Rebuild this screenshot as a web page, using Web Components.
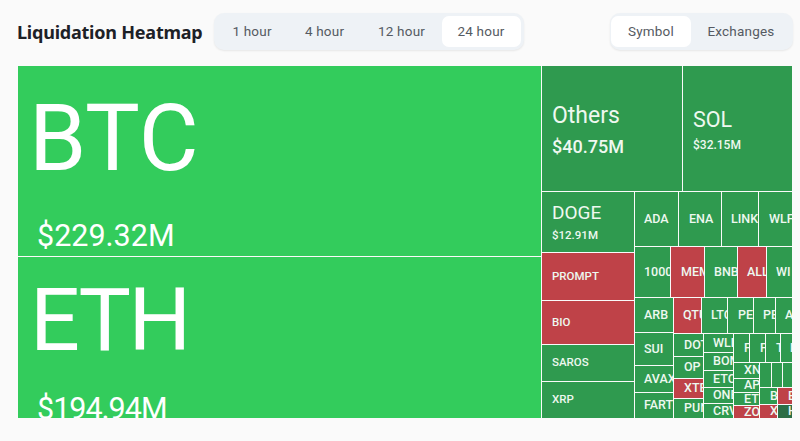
<!DOCTYPE html>
<html><head><meta charset="utf-8"><style>
html,body{margin:0;padding:0;background:#fafafa;width:800px;height:441px;overflow:hidden;font-family:Roboto,"Liberation Sans",sans-serif}
</style></head><body>
<hm-page></hm-page>
<script>
class Base extends HTMLElement{
  constructor(){super();this.attachShadow({mode:'open'});}
}
class HmTabs extends Base{connectedCallback(){
  const p=this.getAttribute('p')||'3px';
  this.shadowRoot.innerHTML=`<style>:host{display:flex;height:37px;box-sizing:border-box;padding:${p};background:#eef2f6;border-radius:10px;box-shadow:0 1px 2px rgba(0,0,0,.08);}</style><slot></slot>`;
}}
class HmTab extends Base{connectedCallback(){
  const on=this.hasAttribute('on');
  this.shadowRoot.innerHTML=`<style>:host{display:flex;align-items:center;justify-content:center;border-radius:7px;font:400 13.5px/1 Roboto,sans-serif;letter-spacing:.2px;color:#555a62;${on?'background:#fff;':''}width:${this.getAttribute('w')}px;height:31px;white-space:nowrap}</style><slot></slot>`;
}}
class HmBox extends Base{connectedCallback(){
  const dir=this.getAttribute('d')||'row',w=this.getAttribute('w'),h=this.getAttribute('h');
  this.shadowRoot.innerHTML=`<style>:host{display:flex;flex-direction:${dir};gap:1px;${w?`width:${w}px;`:''}${h?`height:${h}px;`:''}flex:none;overflow:hidden}</style><slot></slot>`;
}}
const C={g:'#2f9a4f',b:'#33cc5c',r:'#bf4248',d:'#2c6e46'};
class HmCell extends Base{connectedCallback(){
  const w=this.getAttribute('w'),h=this.getAttribute('h'),c=C[this.getAttribute('c')||'g'];
  const fs=+(this.getAttribute('fs')||12.5),pl=this.getAttribute('pl')||'10',val=this.getAttribute('val'),vfs=this.getAttribute('vfs')||fs;
  const t=this.getAttribute('t')||'',vgap=this.getAttribute('gap')||0,pt=this.getAttribute('pt'),vl=this.getAttribute('vl')||0;
  const ls=this.getAttribute('ls')||0,vls=this.getAttribute('vls')||0;
  this.shadowRoot.innerHTML=`<style>
  :host{display:flex;flex:none;box-sizing:border-box;${w?`width:${w}px;`:''}${h?`height:${h}px;`:''}background:${c};color:${fs>50?'#fff':'#eef8f0'};overflow:hidden;flex-direction:column;${pt?`padding-top:${pt}px;justify-content:flex-start;`:'justify-content:center;'}align-items:flex-start;padding-left:${pl}px;}
  .t{font-size:${fs}px;line-height:1;white-space:nowrap;letter-spacing:${ls}px;font-weight:${this.getAttribute('fw')||(fs<15?500:400)};}
  .v{font-size:${vfs}px;line-height:1;margin-top:${vgap}px;margin-left:${vl}px;letter-spacing:${vls}px;white-space:nowrap;font-weight:${this.getAttribute('vw')||400}}
  </style><div class="t">${t}</div>${val?`<div class="v">${val}</div>`:''}`;
}}
class HmPage extends Base{connectedCallback(){
  this.shadowRoot.innerHTML=`<style>
  :host{display:block;width:800px;height:441px;box-sizing:border-box;padding:13px 7px 0 18px}
  header{display:flex;align-items:center;height:37px;margin-bottom:16px}
  h1{margin:0 11px 0 -1px;font:700 18px/1 "Noto Sans",sans-serif;color:#1d2127;letter-spacing:-.22px;white-space:nowrap}
  .sp{flex:1}
  </style>
  <header><h1>Liquidation Heatmap</h1>
   <hm-tabs><hm-tab w="71">1 hour</hm-tab><hm-tab w="74">4 hour</hm-tab><hm-tab w="80">12 hour</hm-tab><hm-tab w="79" on>24 hour</hm-tab></hm-tabs>
   <div class="sp"></div>
   <hm-tabs p="3px 2px 3px 1px"><hm-tab w="80" on>Symbol</hm-tab><hm-tab w="100">Exchanges</hm-tab></hm-tabs>
  </header>
  <hm-box w="774" h="352">
   <hm-box d="column" w="523" h="352">
    <hm-cell w="523" h="190" c="b" t="BTC" fs="92" val="$229.32M" vfs="30.5" vl="8" pl="11" pt="27" gap="36"></hm-cell>
    <hm-cell w="523" h="161" c="b" t="ETH" fs="88" ls="-2.5" val="$194.94M" vfs="30.5" vls="-1" vl="7" pl="12" pt="19" gap="30"></hm-cell>
   </hm-box>
   <hm-box d="column" w="250" h="352">
    <hm-box w="250" h="125">
     <hm-cell w="140" h="125" t="Others" fs="23" val="$40.75M" vfs="18" vw="500" pl="10" pt="38" gap="11"></hm-cell>
     <hm-cell w="109" h="125" t="SOL" fs="21.5" val="$32.15M" vfs="12" vw="500" pl="10" pt="43" gap="8"></hm-cell>
    </hm-box>
    <hm-box w="250" h="226">
     <hm-box d="column" w="92" h="226">
      <hm-cell w="92" h="60" t="DOGE" fs="19" val="$12.91M" vfs="11.5" vw="500" pl="10" pt="11" gap="8"></hm-cell>
      <hm-cell w="92" h="47" c="r" t="PROMPT" fs="11.5"></hm-cell>
      <hm-cell w="92" h="43" c="r" t="BIO" fs="11.5"></hm-cell>
      <hm-cell w="92" h="36" t="SAROS" fs="11.5"></hm-cell>
      <hm-cell w="92" h="36" t="XRP" fs="11.5"></hm-cell>
     </hm-box>
     <hm-box d="column" w="157" h="226">
      <hm-box w="157" h="54">
       <hm-cell w="43" h="54" t="ADA" pl="9"></hm-cell><hm-cell w="42" h="54" t="ENA"></hm-cell><hm-cell w="36" h="54" t="LINK" pl="9"></hm-cell><hm-cell w="33" h="54" t="WLF"></hm-cell>
      </hm-box>
      <hm-box w="157" h="50">
       <hm-cell w="35" h="50" t="1000" pl="9"></hm-cell><hm-cell w="33" h="50" c="r" t="MEM"></hm-cell><hm-cell w="32" h="50" t="BNB" pl="9"></hm-cell><hm-cell w="28" h="50" c="r" t="ALL" pl="9"></hm-cell><hm-cell w="25" h="50" t="WI" pl="9"></hm-cell>
      </hm-box>
      <hm-box w="157" h="120">
       <hm-box d="column" w="38" h="120">
        <hm-cell w="38" h="34" t="ARB" pl="9"></hm-cell><hm-cell w="38" h="32" t="SUI" pl="9"></hm-cell><hm-cell w="38" h="26" t="AVAX" pl="9"></hm-cell><hm-cell w="38" h="25" t="FART" pl="9"></hm-cell>
       </hm-box>
       <hm-box d="column" w="118" h="120">
        <hm-box w="118" h="35">
         <hm-cell w="27" h="35" c="r" t="QTU" pl="9"></hm-cell><hm-cell w="25" h="35" t="LTC" pl="9"></hm-cell><hm-cell w="25" h="35" t="PEN"></hm-cell><hm-cell w="21" h="35" t="PE" pl="9"></hm-cell><hm-cell w="17" h="35" t="A" pl="9"></hm-cell>
        </hm-box>
        <hm-box w="118" h="84">
         <hm-box d="column" w="29" h="84">
          <hm-cell w="29" h="22" t="DOT"></hm-cell><hm-cell w="29" h="21" t="OP"></hm-cell><hm-cell w="29" h="19" c="r" t="XTE"></hm-cell><hm-cell w="29" h="19" t="PUN"></hm-cell>
         </hm-box>
         <hm-box d="column" w="29" h="84">
          <hm-cell w="29" h="18" t="WLD" pl="9"></hm-cell><hm-cell w="29" h="17" t="BOM" pl="9"></hm-cell><hm-cell w="29" h="16" t="ETC" pl="9"></hm-cell><hm-cell w="29" h="15" t="ONE" pl="9"></hm-cell><hm-cell w="29" h="14" t="CRV" pl="9"></hm-cell>
         </hm-box>
         <hm-box d="column" w="59" h="84">
          <hm-box w="59" h="28"><hm-cell w="15" h="28" t="F"></hm-cell><hm-cell w="15" h="28" t="F"></hm-cell><hm-cell w="14" h="28" t="T"></hm-cell><hm-cell w="12" h="28" t="L" pl="9"></hm-cell></hm-box>
          <hm-box w="59" h="55">
           <hm-box d="column" w="25" h="55"><hm-cell w="25" h="15" t="XN"></hm-cell><hm-cell w="25" h="13" t="AP"></hm-cell><hm-cell w="25" h="12" t="ET"></hm-cell><hm-cell w="25" h="12" c="r" t="ZO"></hm-cell></hm-box>
           <hm-box d="column" w="33" h="55">
            <hm-box w="33" h="24"><hm-cell w="11" h="24"></hm-cell><hm-cell w="10" h="24"></hm-cell><hm-cell w="10" h="24"></hm-cell></hm-box>
            <hm-box w="33" h="30">
             <hm-box d="column" w="17" h="30"><hm-cell w="17" h="16" t="B"></hm-cell><hm-cell w="17" h="13" c="r" t="X"></hm-cell></hm-box>
             <hm-box d="column" w="15" h="30"><hm-cell w="15" h="16" c="r" t="B"></hm-cell><hm-cell w="15" h="13" c="d" t="H"></hm-cell></hm-box>
            </hm-box>
           </hm-box>
          </hm-box>
         </hm-box>
        </hm-box>
       </hm-box>
      </hm-box>
     </hm-box>
    </hm-box>
   </hm-box>
  </hm-box>`;
}}
customElements.define('hm-tabs',HmTabs);
customElements.define('hm-tab',HmTab);
customElements.define('hm-box',HmBox);
customElements.define('hm-cell',HmCell);
customElements.define('hm-page',HmPage);
</script>
</body></html>
